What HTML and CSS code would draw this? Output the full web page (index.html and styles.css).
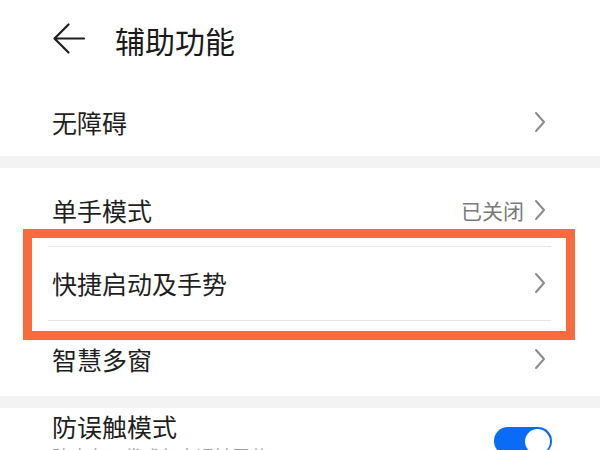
FILE: index.html
```html
<!DOCTYPE html>
<html lang="zh-CN">
<head>
<meta charset="utf-8">
<title>辅助功能</title>
<link rel="stylesheet" href="styles.css">
</head>
<body>
<div class="screen">
  <header class="header">
    <svg class="back" width="32" height="32" viewBox="0 0 32 32">
      <path d="M31 15.5 H2.5 M15.5 1.5 L1.5 15.5 L15.5 29.5" fill="none" stroke="#1e1e1e" stroke-width="2.2" stroke-linecap="round" stroke-linejoin="round"/>
    </svg>
    <h1 class="title">辅助功能</h1>
  </header>

  <section class="card">
    <div class="row row-first">
      <span class="label">无障碍</span>
      <span class="right">
        <svg class="chev" width="12" height="22" viewBox="0 0 12 22"><polyline points="2,2 10,11 2,20" fill="none" stroke="#8a8a8a" stroke-width="2" stroke-linecap="round" stroke-linejoin="round"/></svg>
      </span>
    </div>
  </section>

  <div class="band"></div>

  <section class="card">
    <div class="row row-a">
      <span class="label">单手模式</span>
      <span class="right">
        <span class="value">已关闭</span>
        <svg class="chev" width="12" height="22" viewBox="0 0 12 22"><polyline points="2,2 10,11 2,20" fill="none" stroke="#8a8a8a" stroke-width="2" stroke-linecap="round" stroke-linejoin="round"/></svg>
      </span>
    </div>
    <div class="divider"></div>
    <div class="row row-b">
      <span class="label">快捷启动及手势</span>
      <span class="right">
        <svg class="chev" width="12" height="22" viewBox="0 0 12 22"><polyline points="2,2 10,11 2,20" fill="none" stroke="#8a8a8a" stroke-width="2" stroke-linecap="round" stroke-linejoin="round"/></svg>
      </span>
    </div>
    <div class="divider"></div>
    <div class="row row-c">
      <span class="label">智慧多窗</span>
      <span class="right">
        <svg class="chev" width="12" height="22" viewBox="0 0 12 22"><polyline points="2,2 10,11 2,20" fill="none" stroke="#8a8a8a" stroke-width="2" stroke-linecap="round" stroke-linejoin="round"/></svg>
      </span>
    </div>
    <div class="highlight"></div>
  </section>

  <div class="band"></div>

  <section class="card">
    <div class="row row-d">
      <div class="texts">
        <span class="label">防误触模式</span>
        <span class="sub">防止在口袋或包中误触屏幕</span>
      </div>
      <span class="toggle"><span class="knob"></span></span>
    </div>
  </section>
</div>
</body>
</html>
```

FILE: styles.css
```css
html, body {
  margin: 0;
  padding: 0;
  background: #ffffff;
}

body {
  font-family: "Noto Sans CJK SC", "Noto Sans", sans-serif;
  color: #1f1f1f;
}

.screen {
  width: 600px;
  height: 450px;
  overflow: hidden;
  position: relative;
}

.header {
  height: 80px;
  display: flex;
  align-items: center;
  padding-left: 53px;
  gap: 30px;
  box-sizing: border-box;
}

.back {
  display: block;
  margin-top: -3px;
}

.title {
  margin: 0;
  font-size: 30px;
  font-weight: 400;
  line-height: 40px;
  color: #1a1a1a;
}

.card {
  position: relative;
  background: #ffffff;
}

.band {
  height: 12px;
  background: #f3f3f3;
}

.row {
  display: flex;
  align-items: center;
  justify-content: space-between;
  padding-left: 52px;
  padding-right: 54px;
}

.label {
  font-size: 25px;
  line-height: 34px;
  color: #1f1f1f;
}

.right {
  display: flex;
  align-items: center;
  gap: 10px;
}

.chev {
  display: block;
}

.value {
  font-size: 21px;
  line-height: 30px;
  color: #7a7a7a;
}

.row-first {
  padding-top: 25px;
  padding-bottom: 17px;
}

.row-a {
  padding-top: 25px;
  padding-bottom: 19px;
}

.row-b {
  padding-top: 19px;
  padding-bottom: 20px;
}

.row-c {
  padding-top: 21px;
  padding-bottom: 20px;
}

.divider {
  height: 1px;
  margin: 0 49px 0 48px;
  background: #e6e6e6;
}

.highlight {
  position: absolute;
  left: 23px;
  top: 61px;
  width: 552px;
  height: 111px;
  border: 9px solid #f96b3d;
  box-sizing: border-box;
  pointer-events: none;
}

.row-d {
  padding-top: 1px;
  padding-right: 48px;
}

.texts {
  display: flex;
  flex-direction: column;
}

.sub {
  font-size: 18px;
  line-height: 26px;
  color: #9a9a9a;
}

.toggle {
  width: 58px;
  height: 28px;
  border-radius: 14px;
  background: #0a6cf5;
  display: flex;
  align-items: center;
  justify-content: flex-end;
  padding: 0 2px;
  box-sizing: border-box;
  margin-top: 4px;
}

.knob {
  width: 25px;
  height: 25px;
  border-radius: 50%;
  background: #ffffff;
}
```
